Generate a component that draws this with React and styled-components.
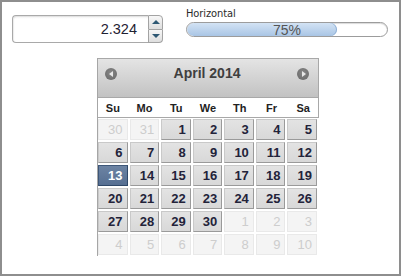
import React from "react";
import styled, { createGlobalStyle } from "styled-components";

const Global = createGlobalStyle`
  html, body { margin: 0; padding: 0; background: #fff; }
  body { font-family: "Liberation Sans", Arial, sans-serif; }
`;

const Frame = styled.div`
  width: 401px;
  height: 276px;
  box-sizing: border-box;
  border: 2px solid #8e8e8e;
  background: #fff;
  display: flex;
  flex-direction: column;
`;

const TopRow = styled.div`
  display: flex;
  align-items: flex-start;
  padding-left: 10px;
`;

const Spinner = styled.div`
  display: flex;
  margin-top: 13px;
  height: 28px;
`;

const SpinInput = styled.div`
  width: 136px;
  box-sizing: border-box;
  border: 1px solid #a9a9a9;
  border-right: none;
  border-radius: 4px 0 0 4px;
  background: linear-gradient(#f2f2f2 0px, #fff 3px, #fff 100%);
  box-shadow: inset 1px 1px 1px rgba(0,0,0,0.08);
  display: flex;
  align-items: center;
  justify-content: flex-end;
  padding-right: 11px;
  font-size: 14.5px;
  color: #1f2233;
`;

const SpinButtons = styled.div`
  width: 15px;
  display: flex;
  flex-direction: column;
`;

const SpinButton = styled.div`
  flex: 1;
  box-sizing: border-box;
  border: 1px solid #a3a3a3;
  border-top-width: ${(p) => (p.$down ? "0" : "1px")};
  border-radius: ${(p) => (p.$down ? "0 0 4px 0" : "0 4px 0 0")};
  background: linear-gradient(#f7f7f7, #dedede);
  display: flex;
  align-items: center;
  justify-content: center;
`;

const Tri = styled.div`
  width: 0;
  height: 0;
  border-left: 4px solid transparent;
  border-right: 4px solid transparent;
  ${(p) =>
    p.$down
      ? "border-top: 4px solid #2e5873;"
      : "border-bottom: 4px solid #2e5873;"}
`;

const ProgressGroup = styled.div`
  margin-left: 23px;
  margin-top: 5px;
  display: flex;
  flex-direction: column;
`;

const ProgressLabel = styled.div`
  font-size: 11px;
  line-height: 13px;
  color: #2a2a2a;
  font-family: "DejaVu Sans Condensed", "Liberation Sans", sans-serif;
  letter-spacing: -0.1px;
`;

const ProgressTrack = styled.div`
  position: relative;
  margin-top: 2px;
  width: 202px;
  height: 15px;
  box-sizing: border-box;
  border: 1px solid #9c9c9c;
  border-radius: 8px;
  background: #fff;
  box-shadow: inset 0 1px 1px rgba(0,0,0,0.15);
  overflow: hidden;
`;

const ProgressFill = styled.div`
  height: 100%;
  border-radius: 7px;
  background: linear-gradient(#d3e3f4, #a9c5e5);
  box-shadow: inset -1px 0 0 #8fb0d6;
`;

const ProgressText = styled.div`
  position: absolute;
  inset: 0;
  display: flex;
  align-items: center;
  justify-content: center;
  font-size: 14px;
  color: #555;
`;

const Calendar = styled.div`
  margin-top: 15px;
  margin-left: 95px;
  width: 221px;
  border-left: 1px solid #a6a6a6;
`;

const Header = styled.div`
  height: 40px;
  box-sizing: border-box;
  border: 1px solid #a8a8a8;
  border-left: none;
  background: linear-gradient(#e4e4e4, #c2c2c2);
  display: flex;
  align-items: flex-start;
  justify-content: space-between;
  padding: 6px 9px 0 7px;
`;

const Title = styled.div`
  font-size: 14px;
  line-height: 17px;
  font-weight: bold;
  color: #3f3f3f;
`;

const NavIcon = styled.div`
  width: 12px;
  height: 12px;
  margin-top: 3px;
  border-radius: 50%;
  background: radial-gradient(circle at 50% 40%, #888, #666);
  display: flex;
  align-items: center;
  justify-content: center;
`;

const NavTri = styled.div`
  width: 0;
  height: 0;
  border-top: 3px solid transparent;
  border-bottom: 3px solid transparent;
  ${(p) =>
    p.$next
      ? "border-left: 4px solid #e8e8e8; margin-left: 1px;"
      : "border-right: 4px solid #e8e8e8; margin-right: 1px;"}
`;

const DayNames = styled.div`
  height: 20px;
  box-sizing: border-box;
  border-right: 1px solid #a8a8a8;
  border-bottom: 1px solid #a8a8a8;
  background: #fff;
  display: grid;
  grid-template-columns: repeat(7, 1fr);
  column-gap: 2px;
  align-items: center;
`;

const DayName = styled.div`
  text-align: center;
  font-size: 11px;
  font-weight: bold;
  color: #222;
`;

const Grid = styled.div`
  display: grid;
  grid-template-columns: repeat(7, 1fr);
  grid-auto-rows: 21px;
  column-gap: 2px;
  row-gap: 2px;
  padding: 1px 2px 1px 0;
`;

const Cell = styled.div`
  box-sizing: border-box;
  border: 1px solid;
  padding-right: 4px;
  text-align: right;
  font-size: 13px;
  line-height: 19px;
  ${(p) =>
    p.$other
      ? `
    background: #f4f4f4;
    border-color: #e9e9e9;
    color: #cdcdcd;
    font-weight: normal;
  `
      : p.$selected
      ? `
    background: linear-gradient(#6c83a3, #566f92);
    border-color: #3e5779 #2f4869 #2f4869 #3e5779;
    color: #fff;
    font-weight: bold;
  `
      : `
    background: linear-gradient(#e3e3e3, #d8d8d8);
    border-color: #c9c9c9 #9a9a9a #9a9a9a #c9c9c9;
    color: #23233a;
    font-weight: bold;
  `}
`;

const days = ["Su", "Mo", "Tu", "We", "Th", "Fr", "Sa"];

const cells = [];
[30, 31].forEach((d) => cells.push({ d, other: true }));
for (let d = 1; d <= 30; d++) cells.push({ d, selected: d === 13 });
for (let d = 1; d <= 10; d++) cells.push({ d, other: true });

export default function App() {
  return (
    <>
      <Global />
      <Frame>
        <TopRow>
          <Spinner>
            <SpinInput>2.324</SpinInput>
            <SpinButtons>
              <SpinButton>
                <Tri />
              </SpinButton>
              <SpinButton $down>
                <Tri $down />
              </SpinButton>
            </SpinButtons>
          </Spinner>
          <ProgressGroup>
            <ProgressLabel>Horizontal</ProgressLabel>
            <ProgressTrack>
              <ProgressFill style={{ width: "75%" }} />
              <ProgressText>75%</ProgressText>
            </ProgressTrack>
          </ProgressGroup>
        </TopRow>
        <Calendar>
          <Header>
            <NavIcon>
              <NavTri />
            </NavIcon>
            <Title>April 2014</Title>
            <NavIcon>
              <NavTri $next />
            </NavIcon>
          </Header>
          <DayNames>
            {days.map((d) => (
              <DayName key={d}>{d}</DayName>
            ))}
          </DayNames>
          <Grid>
            {cells.map((c, i) => (
              <Cell key={i} $other={c.other} $selected={c.selected}>
                {c.d}
              </Cell>
            ))}
          </Grid>
        </Calendar>
      </Frame>
    </>
  );
}
